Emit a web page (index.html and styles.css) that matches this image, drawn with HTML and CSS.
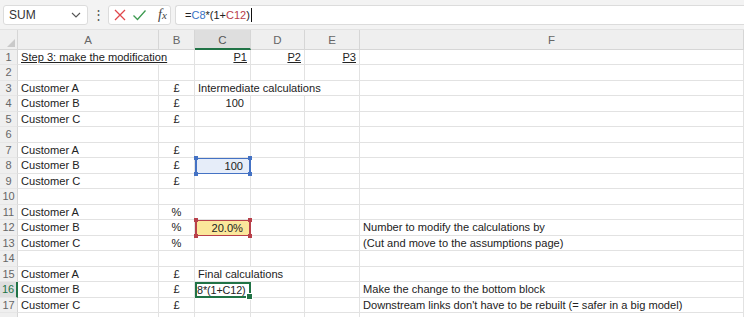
FILE: index.html
```html
<!DOCTYPE html>
<html lang="en">
<head>
  <meta charset="UTF-8">
  <meta name="viewport" content="width=device-width, initial-scale=1.0">
  <title>Step 3 - make the modification</title>

  <link rel="stylesheet" href="styles.css">
</head>
<body>
  <div class="bar">
    <div class="namebox">
      <span>SUM</span>
      <svg class="chev" width="10" height="6" viewBox="0 0 10 6"><path d="M1 1 L5 5 L9 1" fill="none" stroke="#555" stroke-width="1.1"/></svg>
    </div>
    <div class="dots">&#8942;</div>
    <div class="fxbox">
      <svg width="14" height="14" viewBox="0 0 14 14"><path d="M2 2 L12 12 M12 2 L2 12" stroke="#e0474c" stroke-width="1.3" fill="none"/></svg>
      <svg width="15" height="14" viewBox="0 0 15 14"><path d="M1.5 7.5 L5.5 11.5 L13.5 2.5" stroke="#3d9a50" stroke-width="1.3" fill="none"/></svg>
      <span class="fx">f<i>x</i></span>
    </div>
    <div class="formula">=<span class="blue">C8</span>*(1+<span class="red">C12</span>)<span class="caret"></span></div>
  </div>

  <div class="sheet">
    <div class="corner"></div>
    <div class="ch">A</div><div class="ch">B</div><div class="ch sel">C</div><div class="ch">D</div><div class="ch">E</div><div class="ch">F</div>

    <div class="rh">1</div>
    <div class="c span2"><u>Step 3: make the modification</u></div><div class="c r"><u>P1</u></div><div class="c r"><u>P2</u></div><div class="c r"><u>P3</u></div><div class="c"></div>

    <div class="rh">2</div>
    <div class="c"></div><div class="c"></div><div class="c"></div><div class="c"></div><div class="c"></div><div class="c"></div>

    <div class="rh">3</div>
    <div class="c">Customer A</div><div class="c m">£</div><div class="c span3">Intermediate calculations</div><div class="c"></div>

    <div class="rh">4</div>
    <div class="c">Customer B</div><div class="c m">£</div><div class="c r num">100</div><div class="c"></div><div class="c"></div><div class="c"></div>

    <div class="rh">5</div>
    <div class="c">Customer C</div><div class="c m">£</div><div class="c"></div><div class="c"></div><div class="c"></div><div class="c"></div>

    <div class="rh">6</div>
    <div class="c"></div><div class="c"></div><div class="c"></div><div class="c"></div><div class="c"></div><div class="c"></div>

    <div class="rh">7</div>
    <div class="c">Customer A</div><div class="c m">£</div><div class="c"></div><div class="c"></div><div class="c"></div><div class="c"></div>

    <div class="rh">8</div>
    <div class="c">Customer B</div><div class="c m">£</div>
    <div class="c r num ref ref-blue">100<i class="k tl"></i><i class="k tr"></i><i class="k bl"></i><i class="k br"></i></div>
    <div class="c"></div><div class="c"></div><div class="c"></div>

    <div class="rh">9</div>
    <div class="c">Customer C</div><div class="c m">£</div><div class="c"></div><div class="c"></div><div class="c"></div><div class="c"></div>

    <div class="rh">10</div>
    <div class="c"></div><div class="c"></div><div class="c"></div><div class="c"></div><div class="c"></div><div class="c"></div>

    <div class="rh">11</div>
    <div class="c">Customer A</div><div class="c m">%</div><div class="c"></div><div class="c"></div><div class="c"></div><div class="c"></div>

    <div class="rh">12</div>
    <div class="c">Customer B</div><div class="c m">%</div>
    <div class="c r num ref ref-red">20.0%<i class="k tl"></i><i class="k tr"></i><i class="k bl"></i><i class="k br"></i></div>
    <div class="c"></div><div class="c"></div><div class="c">Number to modify the calculations by</div>

    <div class="rh">13</div>
    <div class="c">Customer C</div><div class="c m">%</div><div class="c"></div><div class="c"></div><div class="c"></div><div class="c">(Cut and move to the assumptions page)</div>

    <div class="rh">14</div>
    <div class="c"></div><div class="c"></div><div class="c"></div><div class="c"></div><div class="c"></div><div class="c"></div>

    <div class="rh">15</div>
    <div class="c">Customer A</div><div class="c m">£</div><div class="c span2">Final calculations</div><div class="c"></div><div class="c"></div>

    <div class="rh act">16</div>
    <div class="c">Customer B</div><div class="c m">£</div>
    <div class="c active">8*(1+C12)<i class="handle"></i></div>
    <div class="c"></div><div class="c"></div><div class="c">Make the change to the bottom block</div>

    <div class="rh">17</div>
    <div class="c">Customer C</div><div class="c m">£</div><div class="c"></div><div class="c"></div><div class="c"></div><div class="c">Downstream links don't have to be rebuilt (= safer in a big model)</div>

    <div class="rh"></div>
    <div class="c"></div><div class="c"></div><div class="c"></div><div class="c"></div><div class="c"></div><div class="c"></div>
  </div>
</body>
</html>
```

FILE: styles.css
```css
body {
  margin: 0;
  width: 744px;
  height: 317px;
  overflow: hidden;
  background: #fff;
  font-family: "Liberation Sans", Arial, sans-serif;
  color: #222;
}

/* formula bar */
.bar {
  height: 30px;
  box-sizing: border-box;
  padding: 5px 0 4px 3px;
  display: flex;
  align-items: stretch;
  background: #f3f3f3;
  border-bottom: 1px solid #e2e2e2;
}
.namebox {
  width: 85px;
  box-sizing: border-box;
  background: #fff;
  border: 1px solid #dcdcdc;
  border-radius: 3px;
  display: flex;
  align-items: center;
  justify-content: space-between;
  padding: 0 6px 0 5px;
  font-size: 12px;
  color: #333;
}
.dots {
  width: 20px;
  text-align: center;
  font-size: 13px;
  color: #555;
  line-height: 20px;
}
.fxbox {
  width: 63px;
  box-sizing: border-box;
  background: #fff;
  border: 1px solid #dcdcdc;
  border-radius: 3px;
  display: flex;
  align-items: center;
  gap: 5px;
  padding-left: 4px;
}
.fx {
  font-family: "Liberation Serif", serif;
  font-style: italic;
  font-size: 14px;
  color: #444;
  margin-left: 6px;
}
.fx i {
  font-size: 11px;
}
.formula {
  flex: 1;
  margin-left: 4px;
  background: #fff;
  border: 1px solid #dcdcdc;
  border-right: none;
  border-radius: 3px 0 0 3px;
  display: flex;
  align-items: center;
  padding-left: 9px;
  font-size: 11px;
  color: #222;
}
.blue { color: #3a73c6; }
.red { color: #b8404a; }
.caret {
  display: inline-block;
  width: 1px;
  height: 14px;
  background: #111;
  margin-left: 1px;
}

/* grid */
.sheet {
  display: grid;
  grid-template-columns: 18px 141px 36px 56px 54px 55px 384px;
  grid-template-rows: 19.5px repeat(18, 15.5px);
  font-size: 11.1px;
}
.corner, .ch, .rh {
  background: #efefef;
  color: #666;
  box-sizing: border-box;
  border-right: 1px solid #d6d6d6;
  border-bottom: 1px solid #d6d6d6;
}
.corner {
  position: relative;
}
.corner::after {
  content: "";
  position: absolute;
  right: 2px;
  bottom: 2px;
  border-left: 8px solid transparent;
  border-bottom: 8px solid #c9c9c9;
}
.ch {
  text-align: center;
  padding-top: 3px;
  line-height: 15px;
  font-size: 11.5px;
}
.ch.sel {
  background: #dedede;
  color: #555;
  border-bottom: 2px solid #217346;
}
.rh {
  text-align: center;
  line-height: 15px;
  font-size: 11px;
  border-bottom-color: #e6e6e6;
}
.rh.act {
  background: #dedede;
  color: #217346;
  border-right: 2px solid #217346;
}
.c {
  box-sizing: border-box;
  border-right: 1px solid #e2e2e2;
  border-bottom: 1px solid #e2e2e2;
  padding: 0 3px;
  line-height: 15px;
  white-space: nowrap;
  overflow: hidden;
}
.c u {
  text-underline-offset: 1px;
}
.span2 { grid-column: span 2; }
.span3 { grid-column: span 3; }
.r { text-align: right; }
.m { text-align: center; }
.num { padding-right: 6px; }

/* formula references */
.ref {
  position: relative;
  overflow: visible;
}
.ref-blue {
  background: #e6edf9;
  border: 1px solid #4472c4;
  border-left-width: 2px;
  border-right-width: 2px;
}
.ref-red {
  background: #fbe79b;
  border: 1px solid #b8404a;
  border-left-width: 2px;
  border-right-width: 2px;
}
.k {
  position: absolute;
  width: 4px;
  height: 4px;
}
.ref-blue .k { background: #4472c4; }
.ref-red .k { background: #b8404a; }
.tl { left: -3px; top: -3px; }
.tr { right: -3px; top: -3px; }
.bl { left: -3px; bottom: -3px; }
.br { right: -3px; bottom: -3px; }

.active {
  position: relative;
  border: 2px solid #217346;
  padding: 0;
  font-size: 10.8px;
  letter-spacing: -0.1px;
  line-height: 12px;
  overflow: visible;
}
.handle {
  position: absolute;
  right: -4px;
  bottom: -4px;
  width: 5px;
  height: 5px;
  background: #217346;
  border: 1px solid #fff;
}
```
